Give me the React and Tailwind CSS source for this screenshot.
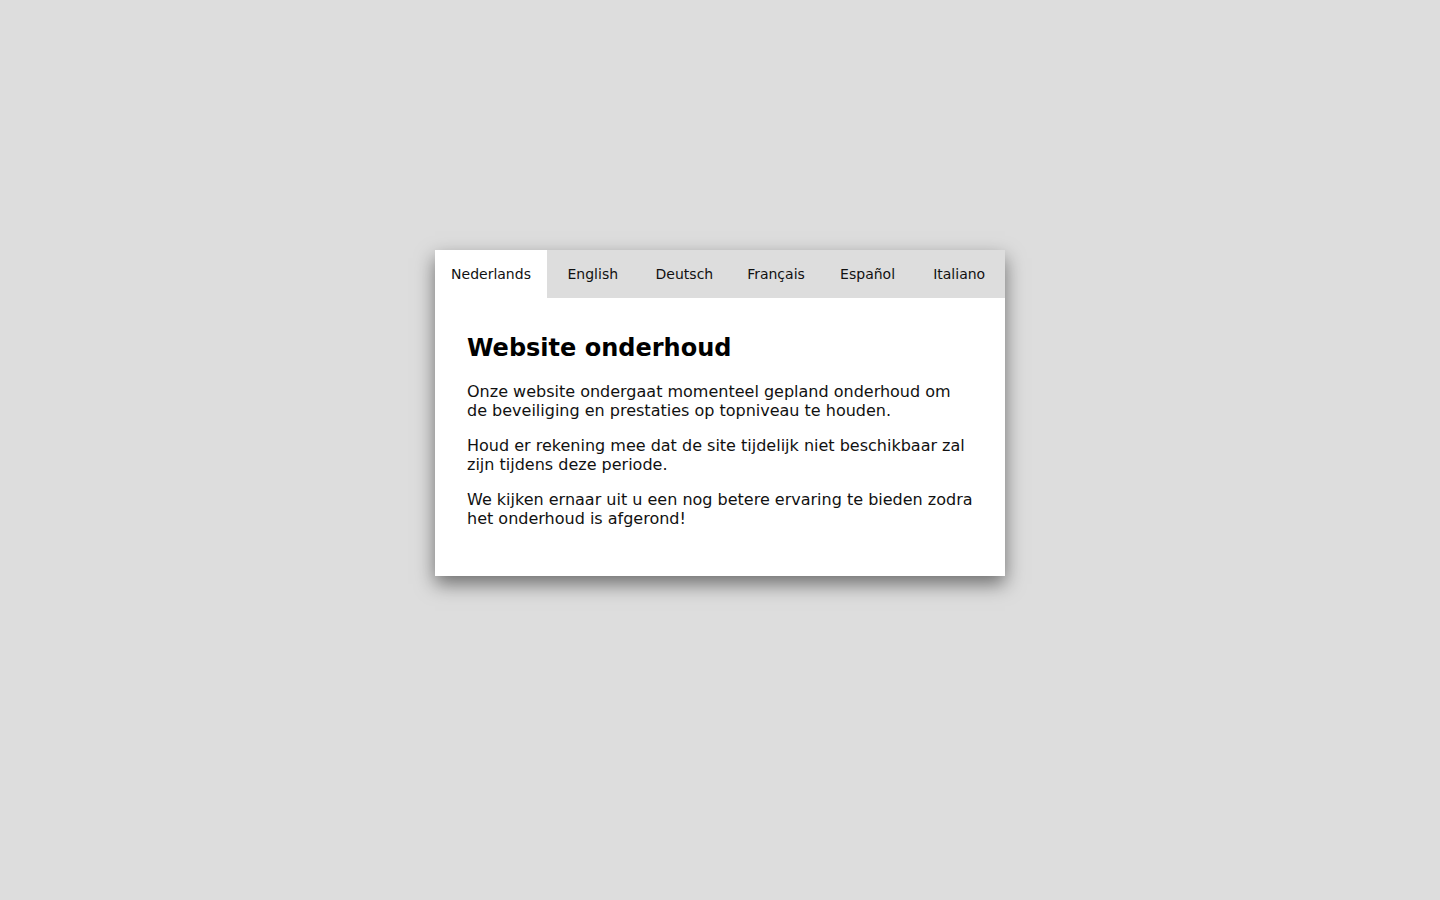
import React from "react";

const tabs = ["English", "Deutsch", "Français", "Español", "Italiano"];

export default function App() {
  return (
    <div
      className="min-h-screen w-full bg-[#dddddd] pt-[250px]"
      style={{ fontFamily: '"DejaVu Sans", sans-serif' }}
    >
      <div className="mx-auto w-[570px] bg-white shadow-[0_8px_18px_rgba(0,0,0,0.5)]">
        <div className="flex h-[48px] bg-[#dddddd] text-[14px] text-[#111]">
          <div className="flex w-[112px] items-center justify-center bg-white">Nederlands</div>
          {tabs.map((t) => (
            <div key={t} className="flex flex-1 items-center justify-center">
              {t}
            </div>
          ))}
        </div>
        <div className="px-8 pt-[36px] pb-[32px] text-[16px] leading-[19px] text-[#111]">
          <h2 className="mb-[20px] text-[24px] leading-[28px] font-bold text-black">Website onderhoud</h2>
          <p className="mb-4">
            Onze website ondergaat momenteel gepland onderhoud om de beveiliging en prestaties op topniveau te houden.
          </p>
          <p className="mb-4">
            Houd er rekening mee dat de site tijdelijk niet beschikbaar zal zijn tijdens deze periode.
          </p>
          <p className="mb-4">
            We kijken ernaar uit u een nog betere ervaring te bieden zodra het onderhoud is afgerond!
          </p>
        </div>
      </div>
    </div>
  );
}
